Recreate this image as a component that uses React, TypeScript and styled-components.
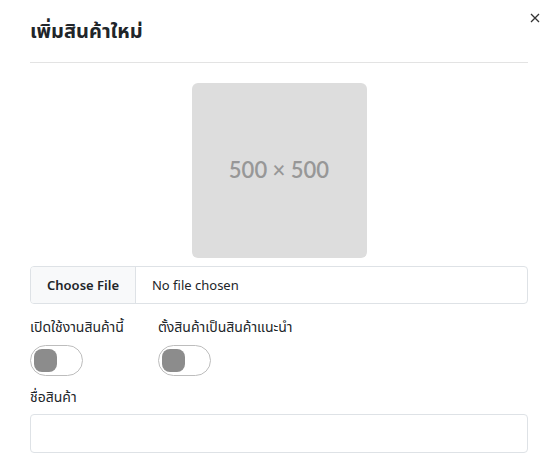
import React from "react";
import styled, { createGlobalStyle } from "styled-components";

const GlobalStyle = createGlobalStyle`
  html, body {
    margin: 0;
    padding: 0;
    background: #ffffff;
  }
  body {
    font-family: "Noto Sans", "Noto Sans Thai", "DejaVu Sans", sans-serif;
    color: #212529;
  }
  * {
    box-sizing: border-box;
  }
`;

const Modal = styled.div`
  width: 557px;
  height: 461px;
  overflow: hidden;
  position: relative;
  padding: 16px 29px 0 30px;
`;

const Header = styled.div`
  display: flex;
  align-items: center;
  height: 30px;
  margin-bottom: 16px;
`;

const Title = styled.h5`
  margin: 0;
  font-size: 20px;
  font-weight: 700;
  line-height: 30px;
`;

const CloseButton = styled.button`
  position: absolute;
  top: 10px;
  right: 14px;
  width: 16px;
  height: 16px;
  padding: 0;
  border: 0;
  background: transparent;
  display: flex;
  align-items: center;
  justify-content: center;
  cursor: pointer;
`;

const Divider = styled.hr`
  margin: 0 0 20px;
  border: 0;
  border-top: 1px solid #e3e3e3;
`;

const PreviewWrap = styled.div`
  display: flex;
  justify-content: center;
  margin-bottom: 8px;
`;

const Placeholder = styled.div`
  width: 175px;
  height: 175px;
  border-radius: 6px;
  background: #dddddd;
  color: #979797;
  display: flex;
  align-items: center;
  justify-content: center;
  font-family: "Lato", sans-serif;
  font-size: 22px;
  font-weight: 600;
  padding-bottom: 2px;
`;

const FileField = styled.label`
  display: flex;
  height: 38px;
  border: 1px solid #dee2e6;
  border-radius: 4px;
  overflow: hidden;
  font-size: 13px;
  margin-bottom: 12px;
`;

const FileButton = styled.span`
  display: flex;
  align-items: center;
  padding: 0 16px;
  background: #f8f9fa;
  border-right: 1px solid #dee2e6;
  font-weight: 600;
`;

const FileName = styled.span`
  display: flex;
  align-items: center;
  padding: 0 16px;
`;

const SwitchRow = styled.div`
  display: flex;
  gap: 34px;
  margin-bottom: 10px;
`;

const SwitchGroup = styled.div`
  display: flex;
  flex-direction: column;
  gap: 8px;
`;

const Label = styled.div`
  font-size: 14px;
  line-height: 21px;
`;

const Switch = styled.span`
  width: 53px;
  height: 31px;
  border: 1px solid #bdbdbd;
  border-radius: 16px;
  display: flex;
  align-items: center;
  padding-left: 3px;
`;

const Knob = styled.span`
  width: 23px;
  height: 23px;
  border-radius: 8px;
  background: #8c8c8c;
`;

const Field = styled.div`
  display: flex;
  flex-direction: column;
  gap: 7px;
`;

const TextInput = styled.input`
  height: 39px;
  border: 1px solid #dee2e6;
  border-radius: 4px;
  padding: 0 12px;
  font: inherit;
`;

export default function App() {
  return (
    <>
      <GlobalStyle />
      <Modal>
        <Header>
          <Title>เพิ่มสินค้าใหม่</Title>
        </Header>
        <CloseButton aria-label="close">
          <svg width="10" height="10" viewBox="0 0 10 10">
            <path d="M1 1L9 9M9 1L1 9" stroke="#333" strokeWidth="1.3" />
          </svg>
        </CloseButton>
        <Divider />
        <PreviewWrap>
          <Placeholder>500 × 500</Placeholder>
        </PreviewWrap>
        <FileField>
          <FileButton>Choose File</FileButton>
          <FileName>No file chosen</FileName>
        </FileField>
        <SwitchRow>
          <SwitchGroup>
            <Label>เปิดใช้งานสินค้านี้</Label>
            <Switch>
              <Knob />
            </Switch>
          </SwitchGroup>
          <SwitchGroup>
            <Label>ตั้งสินค้าเป็นสินค้าแนะนำ</Label>
            <Switch>
              <Knob />
            </Switch>
          </SwitchGroup>
        </SwitchRow>
        <Field>
          <Label>ชื่อสินค้า</Label>
          <TextInput />
        </Field>
      </Modal>
    </>
  );
}
